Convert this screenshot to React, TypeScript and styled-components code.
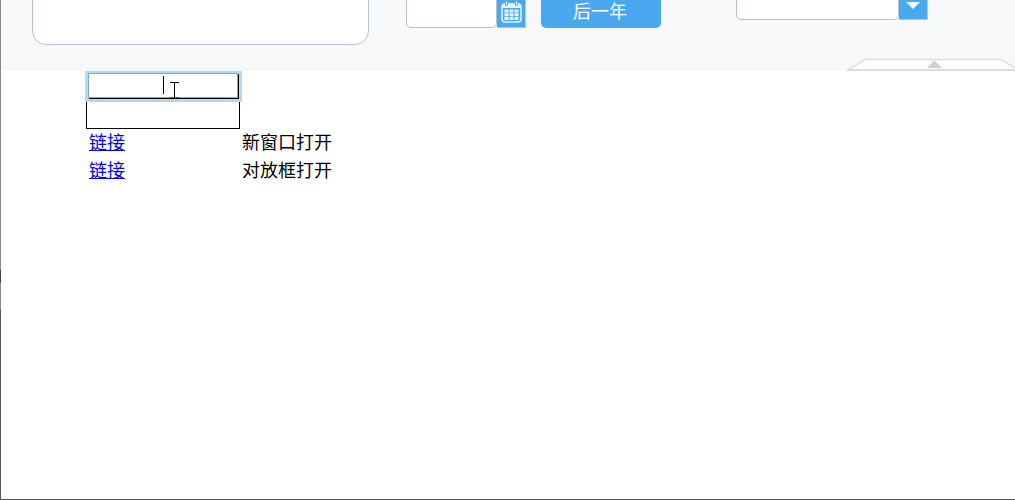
import React from 'react';
import styled, { createGlobalStyle } from 'styled-components';

const GlobalStyle = createGlobalStyle`
    html, body {
        margin: 0;
        padding: 0;
        background: #fff;
    }

    * {
        box-sizing: border-box;
    }
`;

const Page = styled.div`
    width: 1015px;
    height: 500px;
    overflow: hidden;
    background: #fff;
    border-style: solid;
    border-width: 0 0 1px 1px;
    border-image: linear-gradient(to bottom, #8a8a8a 0 270px, #444 270px 283px, #888 283px 310px, #555 310px) 1;
    font-family: "Liberation Sans", "Noto Sans CJK SC", sans-serif;
    font-size: 18px;
    color: #000;
`;

const Header = styled.div`
    position: relative;
    z-index: 2;
    height: 71px;
    overflow: hidden;
    background: #f7f8fa;
`;

const FilterRow = styled.div`
    display: flex;
    align-items: flex-start;
    margin-top: -20px;
    padding-left: 31px;
`;

const MemoBox = styled.div`
    width: 337px;
    height: 65px;
    margin-right: 37px;
    background: #fff;
    border: 1px solid #b9bfd6;
    border-radius: 14px;
`;

const DateField = styled.div`
    display: flex;
    height: 48px;
    margin-right: 15px;
`;

const DateInput = styled.div`
    width: 91px;
    background: #fff;
    border: 1px solid #b9bfd6;
    border-radius: 5px;
`;

const CalendarButton = styled.div`
    width: 29px;
    display: flex;
    align-items: flex-end;
    justify-content: center;
    padding-bottom: 4px;
    background: #4aa8ee;
    border-right: 1px solid #b9c3d3;
    border-bottom: 1px solid #b9c3d3;
`;

const YearButton = styled.button`
    width: 120px;
    height: 48px;
    margin-right: 75px;
    padding: 16px 2px 0 0;
    border: none;
    border-radius: 5px;
    background: #4aa8ee;
    color: #fff;
    font-family: inherit;
    font-size: 18px;
    line-height: 32px;
`;

const SelectField = styled.div`
    display: flex;
    height: 40px;
`;

const SelectInput = styled.div`
    width: 163px;
    background: #fff;
    border: 1px solid #b9bfd6;
    border-radius: 5px;
`;

const SelectArrow = styled.div`
    width: 29px;
    display: flex;
    align-items: flex-end;
    justify-content: center;
    padding-bottom: 10px;
    background: #4aa8ee;
    border-right: 1px solid #b9c3d3;
    border-bottom: 1px solid #b9c3d3;
`;

const CollapseTab = styled.svg`
    position: absolute;
    right: 0;
    bottom: 0;
    display: block;
`;

const FormGrid = styled.div`
    display: grid;
    grid-template-columns: 155px max-content;
    grid-auto-rows: 28px;
    align-items: center;
    margin-left: 85px;
    margin-top: 1px;
`;

const InputCell = styled.div<{ $second?: boolean }>`
    position: relative;
    grid-column: 1 / 3;
    width: 154px;
    height: 28px;
    margin-top: ${(p) => (p.$second ? '1px' : '0')};
`;

const TextInput = styled.input<{ $focused?: boolean }>`
    display: block;
    width: ${(p) => (p.$focused ? '150px' : '154px')};
    height: ${(p) => (p.$focused ? '25px' : '28px')};
    margin: ${(p) => (p.$focused ? '1px 0 0 2px' : '0')};
    padding: 0;
    background: #fff;
    outline: none;
    border: 1px solid #000;
    border-radius: 0;
    ${(p) =>
        p.$focused
            ? `
        position: relative;
        z-index: 1;
        border-color: #78a9d6;
        box-shadow: 1px 1px 0 0 #000, 0 0 0 3px #b5d7ef, 1px 1px 0 3px #b5d7ef;
    `
            : ''}
`;

const TextCaret = styled.span`
    position: absolute;
    z-index: 2;
    left: 77px;
    top: 4px;
    width: 1px;
    height: 18px;
    background: #000;
`;

const BeamCursor = styled.svg`
    position: absolute;
    z-index: 2;
    left: 84px;
    top: 10px;
    display: block;
`;

const LinkCell = styled.a`
    justify-self: start;
    margin: 2px 0 0 3px;
    color: #0000ee;
    text-decoration: underline;
    line-height: 24px;
`;

const ModeLabel = styled.span`
    line-height: 24px;
    margin: 2px 0 0 1px;
`;

const CalendarIcon = () => (
    <svg width="21" height="22" viewBox="0 0 21 22" fill="none">
        <rect x="1" y="3" width="19" height="18" rx="3" stroke="#e6f3fd" strokeWidth="1.6" />
        <path d="M1 4.5a2 2 0 0 1 2-2h15a2 2 0 0 1 2 2V7H1z" fill="#e6f3fd" />
        <path d="M5.5 0.5v4M15.5 0.5v4" stroke="#4aa8ee" strokeWidth="3" />
        <path d="M5.5 0.5v3M15.5 0.5v3" stroke="#e6f3fd" strokeWidth="1.4" />
        <path
            d="M3.5 8.5h4v3h-4zM8.5 8.5h4v3h-4zM13.5 8.5h4v3h-4zM3.5 12.3h4v3h-4zM8.5 12.3h4v3h-4zM13.5 12.3h4v3h-4zM3.5 16.1h4v3h-4zM8.5 16.1h4v3h-4zM13.5 16.1h4v3h-4z"
            fill="#e6f3fd"
        />
    </svg>
);

const App = () => {
    return (
        <Page>
            <GlobalStyle />
            <Header>
                <FilterRow>
                    <MemoBox />
                    <DateField>
                        <DateInput />
                        <CalendarButton>
                            <CalendarIcon />
                        </CalendarButton>
                    </DateField>
                    <YearButton type="button">后一年</YearButton>
                    <SelectField>
                        <SelectInput />
                        <SelectArrow>
                            <svg width="14" height="7" viewBox="0 0 14 7">
                                <path d="M0 0h14L7 7z" fill="#fff" />
                            </svg>
                        </SelectArrow>
                    </SelectField>
                </FilterRow>
                <CollapseTab width="168" height="13" viewBox="0 0 168 13">
                    <path d="M1 12 L18 1.5 H154 L168 10 V12 z" fill="#fdfdfd" />
                    <path d="M0 12 H168" stroke="#dcdcdc" strokeWidth="2" />
                    <path d="M1 12 L18 1.5 H154 L168 10" fill="none" stroke="#dcdcdc" strokeWidth="1.4" />
                    <path d="M80 10 L87.5 2.5 L95 10 z" fill="#d0d0d0" />
                </CollapseTab>
            </Header>
            <FormGrid>
                <InputCell>
                    <TextInput $focused />
                    <TextCaret />
                    <BeamCursor width="10" height="16" viewBox="0 0 10 16">
                        <path d="M0 0.5h9M4.5 0.5v15" stroke="#000" strokeWidth="1" fill="none" />
                        <path d="M0 15.5h9" stroke="#8a4a12" strokeWidth="1" />
                    </BeamCursor>
                </InputCell>
                <InputCell $second>
                    <TextInput />
                </InputCell>
                <LinkCell href="#">链接</LinkCell>
                <ModeLabel>新窗口打开</ModeLabel>
                <LinkCell href="#">链接</LinkCell>
                <ModeLabel>对放框打开</ModeLabel>
            </FormGrid>
        </Page>
    );
};

export default App;
